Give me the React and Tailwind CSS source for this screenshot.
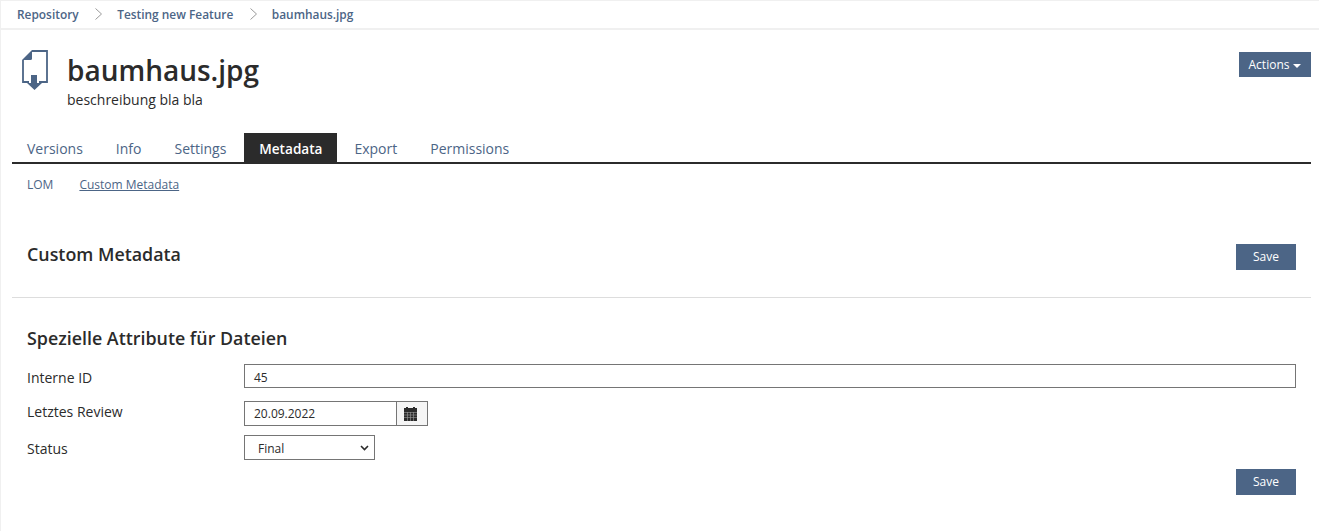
const tabs = ['Versions', 'Info', 'Settings', 'Metadata', 'Export', 'Permissions'];

function FileIcon() {
    return (
        <svg width="26" height="40" viewBox="0 0 26 40" className="block" fill="none">
            <path d="M10 1H25V32H17M7 32H1V10" stroke="#4c6586" strokeWidth="1.8" />
            <path d="M10 0V8.5Q10 10 8.5 10H0Z" fill="#4c6586" />
            <path d="M9 25H15V33H20L12.5 40L5 33H9Z" fill="#4c6586" />
        </svg>
    );
}

function CalendarIcon() {
    return (
        <svg width="13" height="14" viewBox="0 0 13 14" className="block">
            <rect x="0" y="1" width="13" height="13" fill="#2b2b2b" />
            <rect x="2" y="0" width="2" height="2" fill="#2b2b2b" />
            <rect x="9" y="0" width="2" height="2" fill="#2b2b2b" />
            <path d="M0 5.5H13M0 8H13M0 10.5H13M3.5 5V14M6.5 5V14M9.5 5V14" stroke="#9a9a9a" strokeWidth="0.6" />
        </svg>
    );
}

function SaveButton() {
    return (
        <button type="button" className="block w-[60px] h-[26px] bg-[#4c6586] text-white text-[12px] font-medium">
            Save
        </button>
    );
}

function Chevron() {
    return (
        <svg width="7" height="12" viewBox="0 0 7 12" fill="none" className="ml-[16.5px] mr-[15px] -mt-[1px]">
            <path d="M0.5 0.5L6.5 6L0.5 11.5" stroke="#9a9a9a" strokeWidth="1" />
        </svg>
    );
}

export default function App() {
    return (
        <div className="h-[531px] w-[1319px] bg-white overflow-hidden text-[#2b2b2b] border-l border-[#f0f0f0]" style={{ fontFamily: '"Open Sans", sans-serif' }}>
            {/* Breadcrumb */}
            <div className="flex items-center h-[30px] pl-[16px] border-t border-b-2 border-[#f0f0f0] text-[11.9px] font-semibold text-[#4c6586]">
                <span>Repository</span>
                <Chevron />
                <span>Testing new Feature</span>
                <Chevron />
                <span>baumhaus.jpg</span>
            </div>

            <div className="pl-[11px] pr-[8px]">
                {/* Title */}
                <div className="flex justify-between h-[103px]">
                    <div className="flex pt-[20px] pl-[10px]">
                        <div className="w-[45px]"><FileIcon /></div>
                        <div>
                            <h1 className="text-[28px] leading-[40px] font-semibold">baumhaus.jpg</h1>
                            <p className="text-[14px] leading-[20px]">beschreibung bla bla</p>
                        </div>
                    </div>
                    <div className="pt-[22px]">
                        <button type="button" className="flex items-center justify-center w-[72px] h-[25px] bg-[#4c6586] text-white text-[12px]">
                            Actions
                            <span className="ml-[4px] mt-[2px] border-x-[4px] border-x-transparent border-t-[4px] border-t-white"></span>
                        </button>
                    </div>
                </div>

                {/* Tabs */}
                <div className="flex h-[31px] border-b-2 border-[#2b2b2b]">
                    {tabs.map((tab) => (
                        <div
                            key={tab}
                            className={tab === 'Metadata'
                                ? 'h-[29px] w-[93px] ml-[1.5px] mr-[0.5px] text-center leading-[31px] text-[13.6px] font-semibold bg-[#2b2b2b] text-white'
                                : 'h-[29px] leading-[31px] px-[16.5px] first:pl-[15px] text-[14px] text-[#4c6586]'}
                        >
                            {tab}
                        </div>
                    ))}
                </div>

                {/* Sub tabs */}
                <div className="flex gap-[26px] pl-[15px] pt-[13px] text-[12px] leading-[16px] text-[#4c6586]">
                    <span>LOM</span>
                    <span className="underline">Custom Metadata</span>
                </div>

                {/* Form header */}
                <div className="flex justify-between px-[15px] mt-[51px] h-[26px]">
                    <h2 className="text-[17.85px] leading-[20px] font-semibold">Custom Metadata</h2>
                    <SaveButton />
                </div>
                <div className="border-t border-[#dddddd] mt-[27px]"></div>

                {/* Form */}
                <div className="px-[15px]">
                    <h3 className="text-[17.85px] leading-[22px] font-semibold mt-[29px]">Spezielle Attribute für Dateien</h3>
                    <div className="flex items-center mt-[15px] text-[14px]">
                        <label className="w-[217px] mt-[2px]">Interne ID</label>
                        <div className="flex-1 h-[24px] border border-[#757575] pl-[9px] text-[12px] leading-[25px]">45</div>
                    </div>
                    <div className="flex items-center mt-[13px] text-[14px]">
                        <label className="w-[217px] -mt-[5px]">Letztes Review</label>
                        <div className="flex h-[25px] border border-[#757575] text-[12px]">
                            <div className="w-[151px] pl-[9px] leading-[24px]">20.09.2022</div>
                            <div className="w-[31px] pr-[3px] bg-[#f5f5f5] border-l border-[#757575] flex items-center justify-center">
                                <CalendarIcon />
                            </div>
                        </div>
                    </div>
                    <div className="flex items-center mt-[9px] text-[14px]">
                        <label className="w-[217px] mt-[2px]">Status</label>
                        <div className="flex items-center justify-between w-[131px] h-[25px] border border-[#757575] pl-[13px] pr-[5px] text-[12px]">
                            <span className="mt-[3px]">Final</span>
                            <svg width="9" height="6" viewBox="0 0 9 6" fill="none">
                                <path d="M1 1L4.5 4.5L8 1" stroke="#2b2b2b" strokeWidth="1.6" />
                            </svg>
                        </div>
                    </div>
                    <div className="flex justify-end mt-[9px]">
                        <SaveButton />
                    </div>
                </div>
            </div>
        </div>
    );
}
